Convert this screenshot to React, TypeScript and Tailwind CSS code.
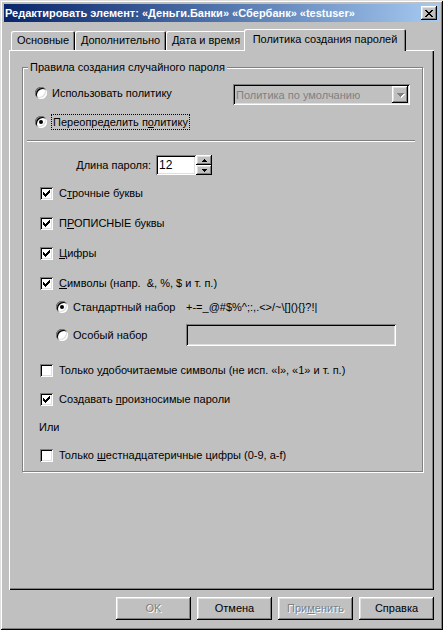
import React from "react";

const raised =
  "shadow-[inset_-1px_-1px_#000,inset_1px_1px_#fff,inset_-2px_-2px_#808080,inset_2px_2px_#dfdfdf]";
const sunken =
  "shadow-[inset_1px_1px_#808080,inset_-1px_-1px_#fff,inset_2px_2px_#000,inset_-2px_-2px_#dfdfdf]";

function Pixels({ rows, w, h, color = "#000" }: { rows: [number, number, number][]; w: number; h: number; color?: string }) {
  return (
    <svg width={w} height={h} viewBox={`0 0 ${w} ${h}`} shapeRendering="crispEdges">
      {rows.map(([y, x, ww], i) => (
        <rect key={i} x={x} y={y} width={ww} height={1} fill={color} />
      ))}
    </svg>
  );
}

const checkRows: [number, number, number][] = [
  [0, 6, 1],
  [1, 5, 2],
  [2, 0, 1],
  [2, 4, 3],
  [3, 0, 2],
  [3, 3, 3],
  [4, 0, 5],
  [5, 1, 3],
  [6, 2, 1],
];

const closeRows: [number, number, number][] = [
  [0, 0, 2],
  [0, 6, 2],
  [1, 1, 2],
  [1, 5, 2],
  [2, 2, 4],
  [3, 3, 2],
  [4, 2, 4],
  [5, 1, 2],
  [5, 5, 2],
  [6, 0, 2],
  [6, 6, 2],
];

const upRows: [number, number, number][] = [
  [0, 2, 1],
  [1, 1, 3],
  [2, 0, 5],
];
const downRows: [number, number, number][] = [
  [0, 0, 5],
  [1, 1, 3],
  [2, 2, 1],
];
const comboRows: [number, number, number][] = [
  [0, 0, 7],
  [1, 1, 5],
  [2, 2, 3],
  [3, 3, 1],
];

function Check({ checked }: { checked?: boolean }) {
  return (
    <div className={`w-[13px] h-[13px] bg-white shrink-0 flex items-center justify-center ${sunken}`}>
      {checked && <Pixels rows={checkRows} w={7} h={7} />}
    </div>
  );
}

function Radio({ on }: { on?: boolean }) {
  return (
    <div className={`w-[12px] h-[12px] rounded-full bg-white shrink-0 flex items-center justify-center ${sunken}`}>
      {on && <div className="w-[4px] h-[4px] rounded-full bg-black" />}
    </div>
  );
}

function CheckRow({ checked, className, children }: { checked?: boolean; className: string; children: React.ReactNode }) {
  return (
    <div className={`flex items-center h-[16px] ${className}`}>
      <div className="ml-[17px]">
        <Check checked={checked} />
      </div>
      <span className="ml-[6px] leading-[14px] whitespace-pre">{children}</span>
    </div>
  );
}

function Button({ children, disabled }: { children: React.ReactNode; disabled?: boolean }) {
  return (
    <div
      className={`w-[75px] h-[23px] bg-[#c0c0c0] flex items-center justify-center ${raised} ${
        disabled ? "text-[#808080] [text-shadow:1px_1px_#fff]" : "text-black"
      }`}
    >
      {children}
    </div>
  );
}

function Tab({ label, w }: { label: string; w: string }) {
  return (
    <div
      className={`${w} h-[19px] bg-[#c0c0c0] flex items-center justify-center rounded-t-[2px] shadow-[inset_1px_1px_#fff,inset_-1px_0_#000,inset_-2px_0_#808080] whitespace-nowrap`}
    >
      {label}
    </div>
  );
}

export default function App() {
  return (
    <div className="w-[443px] h-[630px] bg-[#c0c0c0] p-[4px] flex flex-col font-['Liberation_Sans',Arial,sans-serif] text-[11px] text-black shadow-[inset_1px_1px_#dfdfdf,inset_-1px_-1px_#000,inset_2px_2px_#fff,inset_-2px_-2px_#808080]">
      {/* Title bar */}
      <div className="h-[18px] bg-linear-to-r from-[#0a246a] to-[#a6caf0] flex items-center justify-between pl-[1px] pr-[2px]">
        <span className="text-white font-bold whitespace-nowrap leading-[14px]">
          Редактировать элемент: «Деньги.Банки» «Сбербанк» «testuser»
        </span>
        <div className={`w-[16px] h-[14px] bg-[#c0c0c0] flex items-center justify-center ${raised}`}>
          <Pixels rows={closeRows} w={8} h={7} />
        </div>
      </div>

      {/* Tabs */}
      <div className="mx-[5px] mt-[7px] h-[21px] flex items-end pl-[2px]">
        <Tab label="Основные" w="w-[64px]" />
        <Tab label="Дополнительно" w="w-[91px]" />
        <Tab label="Дата и время" w="w-[80px]" />
        <div className="relative z-10 -ml-[2px] -mb-[1px] w-[162px] h-[22px] bg-[#c0c0c0] flex items-center justify-center pb-[2px] rounded-t-[2px] shadow-[inset_1px_1px_#fff,inset_-1px_0_#000,inset_-2px_0_#808080] whitespace-nowrap">
          Политика создания паролей
        </div>
      </div>

      {/* Panel */}
      <div className="mx-[5px] h-[540px] bg-[#c0c0c0] flex flex-col shadow-[inset_1px_1px_#fff,inset_-1px_-1px_#000,inset_-2px_-2px_#808080]">
        <fieldset className="ml-[13px] mr-[11px] mt-[10px] border border-[#808080] shadow-[inset_1px_1px_#fff,1px_1px_#fff] p-0 pb-[8px] min-w-0 flex flex-col">
          <legend className="ml-[5px] px-[2px] bg-[#c0c0c0] leading-[14px] whitespace-nowrap">
            Правила создания случайного пароля
          </legend>

          {/* Use policy */}
          <div className="mt-[10px] h-[21px] flex items-start">
            <div className="h-[18px] flex items-center">
              <div className="ml-[12px]">
                <Radio />
              </div>
              <span className="ml-[5px] leading-[14px] whitespace-nowrap">Использовать политику</span>
            </div>
            <div className={`ml-auto mr-[12px] w-[177px] h-[21px] bg-[#c0c0c0] flex items-center pl-[3px] pr-[2px] ${sunken}`}>
              <span className="text-[#808080] leading-[14px] whitespace-nowrap">Политика по умолчанию</span>
              <div className={`ml-auto w-[16px] h-[17px] bg-[#c0c0c0] flex items-center justify-center ${raised}`}>
                <div className="relative">
                  <div className="absolute left-[1px] top-[1px]">
                    <Pixels rows={comboRows} w={7} h={4} color="#fff" />
                  </div>
                  <div className="relative">
                    <Pixels rows={comboRows} w={7} h={4} color="#808080" />
                  </div>
                </div>
              </div>
            </div>
          </div>

          {/* Override */}
          <div className="mt-[9px] h-[16px] flex items-center">
            <div className="ml-[12px]">
              <Radio on />
            </div>
            <span className="ml-[4px] h-[16px] px-[1px] border border-dotted border-black leading-[14px] whitespace-nowrap">
              Переопределить п<u>о</u>литику
            </span>
          </div>

          {/* Separator */}
          <div className="mt-[10px] ml-[4px] mr-[7px] h-[2px] border-t border-t-[#808080] border-b border-b-white" />

          {/* Length */}
          <div className="mt-[13px] h-[20px] flex items-center">
            <span className="w-[128px] text-right leading-[14px] whitespace-nowrap">Длина пароля:</span>
            <div className={`ml-[5px] w-[40px] h-[20px] bg-white flex items-center pl-[3px] text-[12px] ${sunken}`}>
              12
            </div>
            <div className="w-[16px] h-[20px] flex flex-col">
              <div className={`h-[10px] bg-[#c0c0c0] flex items-center justify-center ${raised}`}>
                <Pixels rows={upRows} w={5} h={3} />
              </div>
              <div className={`h-[10px] bg-[#c0c0c0] flex items-center justify-center ${raised}`}>
                <Pixels rows={downRows} w={5} h={3} />
              </div>
            </div>
          </div>

          <CheckRow checked className="mt-[10px]">
            С<u>т</u>рочные буквы
          </CheckRow>
          <CheckRow checked className="mt-[14px]">
            П<u>Р</u>ОПИСНЫЕ буквы
          </CheckRow>
          <CheckRow checked className="mt-[14px]">
            <u>Ц</u>ифры
          </CheckRow>
          <CheckRow checked className="mt-[14px]">
            <u>С</u>
            {"имволы (напр.  &, %, $ и т. п.)"}
          </CheckRow>

          {/* Standard set */}
          <div className="mt-[8px] h-[16px] flex items-center">
            <div className="ml-[33px]">
              <Radio on />
            </div>
            <span className="ml-[5px] w-[113px] leading-[14px] whitespace-nowrap">Стандартный набор</span>
            <span className="leading-[14px] whitespace-nowrap">{"+-=_@#$%^;:,.<>/~\\[](){}?!|"}</span>
          </div>

          {/* Custom set */}
          <div className="mt-[9px] h-[22px] flex items-center">
            <div className="ml-[33px]">
              <Radio />
            </div>
            <span className="ml-[5px] w-[113px] leading-[14px] whitespace-nowrap">Особый набор</span>
            <div className={`w-[210px] h-[22px] bg-[#c0c0c0] ${sunken}`} />
          </div>

          <CheckRow className="mt-[16px]">
            Только <u>у</u>
            {"добочитаемые символы (не исп. «l», «1» и т. п.)"}
          </CheckRow>
          <CheckRow checked className="mt-[13px]">
            Создавать <u>п</u>роизносимые пароли
          </CheckRow>

          <div className="mt-[12px] h-[16px] flex items-center ml-[16px] leading-[14px]">Или</div>

          <CheckRow className="mt-[12px]">
            Только <u>ш</u>естнадцатеричные цифры (0-9, a-f)
          </CheckRow>
        </fieldset>
      </div>

      {/* Buttons */}
      <div className="mx-[5px] mt-[7px] flex justify-end gap-[6px]">
        <Button disabled>OK</Button>
        <Button>Отмена</Button>
        <Button disabled>
          <span>
            При<u>м</u>енить
          </span>
        </Button>
        <Button>Справка</Button>
      </div>
    </div>
  );
}
